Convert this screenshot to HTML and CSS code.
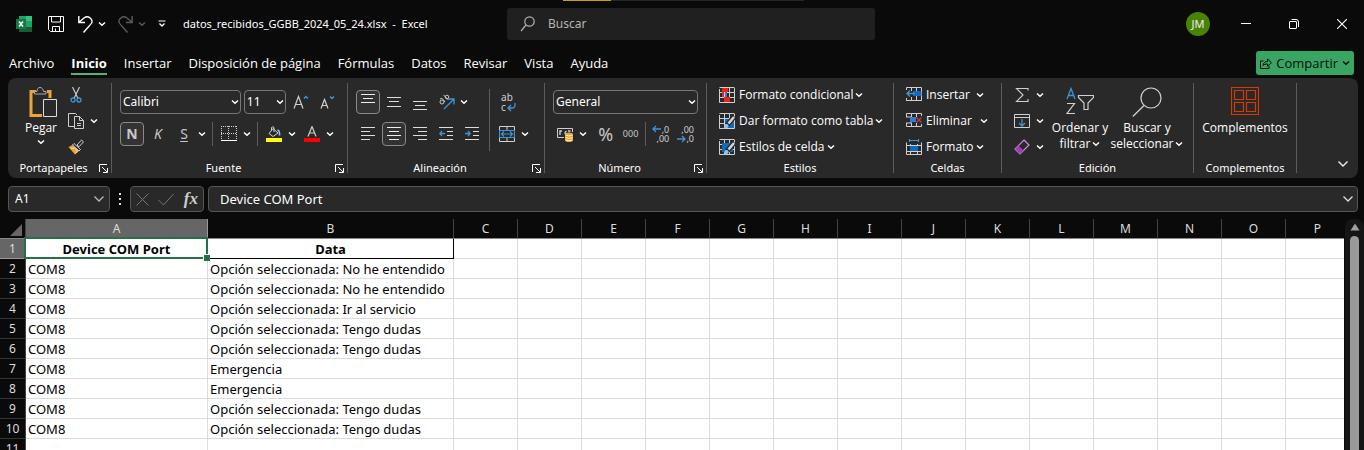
FILE: index.html
```html
<!DOCTYPE html>
<html lang="es">
<head>
<meta charset="utf-8">
<meta name="viewport" content="width=device-width, initial-scale=1">
<title>datos_recibidos_GGBB_2024_05_24.xlsx - Excel</title>
<link rel="stylesheet" href="styles.css">
</head>
<body>
<svg class="defs" aria-hidden="true">
  <symbol id="chev" viewBox="0 0 8 8"><path d="M1 2.500 4 5.200l3-2.700" fill="none" stroke="currentColor" stroke-width="1.500"/></symbol>
  <symbol id="launch" viewBox="0 0 9 9"><path d="M.5 8V.5H8M3 3l5 5M8.500 4v4.500H4" fill="none" stroke="currentColor"/></symbol>
  <symbol id="cells" viewBox="0 0 16 16"><path d="M.5 2v13.500h15V1M.5 .5h15M.5 5.500h15M.5 10.500h15M5.500 .5v15M10.500 .5v15" fill="none" stroke="#d0d0d0"/></symbol>
  <symbol id="brush" viewBox="0 0 16 16"><path d="M15.500 3.500 8 12" stroke="#292929" stroke-width="5"/><path d="M15 4 9.500 10.500" stroke="#d6d6d6" stroke-width="2.500"/><path d="M3 15.500c2 0 2-1 2.500-3s3.500-2 4 0-2 3.500-6.500 3z" fill="#8cc4ee"/></symbol>
</svg>
<div class="app">
  <header class="titlebar">
    <div class="quick">
      <svg class="logo" width="16" height="16" viewBox="0 0 16 16" aria-label="Excel"><path d="M3 0h7v6H3z" fill="#21a366"/><path d="M10 0h6v5h-6z" fill="#33c481"/><path d="M3 5h7v6H3z" fill="#107c41"/><path d="M10 5h6v6h-6z" fill="#21a366"/><path d="M3 11h13v5H3z" fill="#185c37"/><path d="M0 3h10v10H0z" fill="#107c41"/><path d="m3 5.500 4 5M7 5.500l-4 5" stroke="#fff" stroke-width="1.500"/></svg>
      <button class="plain save" aria-label="Guardar"><svg width="16" height="16" viewBox="0 0 16 16"><path d="M.5 .5h15v15H2.500l-2-2zM3.500 .5v5.500h9V.5M4.500 15.500v-5h7v5M7.500 15v-2.500" fill="none" stroke="#fff"/></svg></button>
      <button class="plain undo" aria-label="Deshacer"><svg width="15" height="17" viewBox="0 0 15 17"><path d="M.8 0v6.500H7M1 6.300 6 2c4-3 8.500.5 8 4-.3 2-3 4-8.500 10.500" fill="none" stroke="#fff" stroke-width="1.400"/></svg></button>
      <button class="plain" aria-label="Opciones de deshacer"><svg class="chev"><use href="#chev"/></svg></button>
      <button class="plain redo dim" aria-label="Rehacer"><svg width="15" height="17" viewBox="0 0 15 17"><path d="M14.200 0v6.500H8M14 6.300 9 2C5-1 .5 2.500 1 6c.3 2 3 4 8.500 10.500" fill="none" stroke="currentColor" stroke-width="1.400"/></svg></button>
      <button class="plain dim" aria-label="Opciones de rehacer"><svg class="chev"><use href="#chev"/></svg></button>
      <button class="plain custom" aria-label="Personalizar"><svg width="8" height="8" viewBox="0 0 8 8"><path d="M.5 1h7" stroke="#fff"/><path d="M1.500 3.500 4 6l2.500-2.500" fill="none" stroke="#fff" stroke-width="1.300"/></svg></button>
      <h1>datos_recibidos_GGBB_2024_05_24.xlsx&nbsp; -&nbsp; Excel</h1>
    </div>
    <label class="search">
      <svg width="16" height="16" viewBox="0 0 16 16"><circle cx="9.500" cy="5.500" r="4.700" fill="none" stroke="#b0b0b0" stroke-width="1.200"/><path d="M6 9 1 15" stroke="#b0b0b0" stroke-width="1.200"/></svg>
      <input type="text" placeholder="Buscar" aria-label="Buscar">
    </label>
    <div class="window">
      <span class="avatar">JM</span>
      <button class="plain" aria-label="Minimizar"><svg width="10" height="10" viewBox="0 0 10 10"><path d="M0 4.500h10" stroke="#fff"/></svg></button>
      <button class="plain" aria-label="Restaurar"><svg width="10" height="10" viewBox="0 0 10 10"><path d="M.5 3q0-.5.5-.5h6q.5 0 .5.5v6q0 .5-.5.5H1q-.5 0-.5-.5zM2.500 .5H7q2.500 0 2.500 2.500v5" fill="none" stroke="#fff"/></svg></button>
      <button class="plain" aria-label="Cerrar"><svg width="10" height="10" viewBox="0 0 10 10"><path d="m0 0 10 10M10 0 0 10" stroke="#fff" stroke-width="1.100"/></svg></button>
    </div>
    <div class="notch"></div>
  </header>

  <nav class="tabs">
    <a href="#">Archivo</a><a href="#" class="active">Inicio</a><a href="#">Insertar</a><a href="#">Disposición de página</a><a href="#">Fórmulas</a><a href="#">Datos</a><a href="#">Revisar</a><a href="#">Vista</a><a href="#">Ayuda</a>
    <button class="share"><svg width="12" height="12" viewBox="0 0 12 12"><path d="M3.500 4H.5v7.500h8.500V9M3 8.500C3.500 5.500 5 4.500 7.500 4.500V2l4 3.700-4 3.500V7C5.500 7 4.200 7.300 3 8.500z" fill="none" stroke="#0d0d0d"/></svg>Compartir<svg class="chev"><use href="#chev"/></svg></button>
  </nav>

  <main class="ribbon">
    <section class="group g-clip">
      <div class="body">
        <button class="big paste"><svg width="32" height="31" viewBox="-4 0 32 31"><path d="M7 4.500H2v24h11M18 4.500h3V11" fill="none" stroke="#eda33b" stroke-width="3"/><path d="M5.500 7V4.500H8C8 2 9 .5 11 .5S14 2 14.500 4.500H17V7z" fill="#292929" stroke="#aaa"/><path d="M14.500 12.500h13v17h-13z" fill="#292929" stroke="#ddd"/></svg><span>Pegar</span><svg class="chev"><use href="#chev"/></svg></button>
        <div class="stack">
          <div class="row"><button class="tool" aria-label="Cortar"><svg width="12" height="16" viewBox="0 0 12 16"><path d="M2.500 0 8 11.500M9.500 0 4 11.500" stroke="#c8c8c8" stroke-width="1.200"/><circle cx="3" cy="13" r="2" fill="none" stroke="#3f94d6" stroke-width="1.300"/><circle cx="9" cy="13" r="2" fill="none" stroke="#3f94d6" stroke-width="1.300"/></svg></button></div>
          <div class="row"><button class="tool" aria-label="Copiar"><svg width="16" height="16" viewBox="0 0 16 16"><path d="M6 13.500H.5V.5h7L9 2M6.500 3.500h5l4 4v8h-9zM11.500 3.500v4h4M9 10.500h4M9 12.500h4" fill="none" stroke="#d0d0d0"/></svg></button><button class="drop" aria-label="Más"><svg class="chev"><use href="#chev"/></svg></button></div>
          <div class="row"><button class="tool" aria-label="Copiar formato"><svg width="16" height="16" viewBox="0 0 16 16"><path d="M.5 8 4.500 6l7 5.500-4.500 4z" fill="#eda33b"/><path d="M2.500 9.500 6.500 9l3 3-2 2.500" stroke="#ffe0a0" fill="none"/><path d="m6 4.500 6.500 6L11 12 4.500 6z" fill="#292929" stroke="#d0d0d0"/><path d="m9 6 4.500-5 2 1.800-4.500 5z" fill="#292929" stroke="#d0d0d0"/></svg></button></div>
        </div>
      </div>
      <footer><span>Portapapeles</span><button class="plain" aria-label="Opciones"><svg class="launch"><use href="#launch"/></svg></button></footer>
    </section>

    <section class="group g-font">
      <div class="body two">
        <div class="row">
          <label class="combo wide"><select aria-label="Fuente"><option>Calibri</option></select><svg class="chev"><use href="#chev"/></svg></label>
          <label class="combo size"><select aria-label="Tamaño"><option>11</option></select><svg class="chev"><use href="#chev"/></svg></label>
          <button class="tool" aria-label="Aumentar tamaño"><svg width="16" height="16" viewBox="0 0 16 16"><path d="m1 14.500 4.500-12 4.500 12M2.500 10.500h6" fill="none" stroke="#d0d0d0" stroke-width="1.200"/><path d="m11 4.500 2-2 2 2" fill="none" stroke="#3f94d6" stroke-width="1.400"/></svg></button>
          <button class="tool" aria-label="Disminuir tamaño"><svg width="16" height="16" viewBox="0 0 16 16"><path d="m2 14.500 3.500-9 3.500 9M3 11.500h5" fill="none" stroke="#d0d0d0" stroke-width="1.200"/><path d="m11 2.500 2 2 2-2" fill="none" stroke="#3f94d6" stroke-width="1.400"/></svg></button>
        </div>
        <div class="row g2">
          <button class="tool on glyph bold">N</button>
          <button class="tool glyph italic">K</button>
          <span class="row"><button class="tool glyph under">S</button><button class="drop" aria-label="Subrayado"><svg class="chev"><use href="#chev"/></svg></button></span>
          <i class="sep"></i>
          <span class="row"><button class="tool" aria-label="Bordes"><svg width="16" height="16" viewBox="0 0 16 16"><path d="M0 .5h16M.5 0v14M15.500 0v14M7.500 0v14M0 7.500h16" stroke="#d0d0d0" stroke-dasharray="1 1"/><path d="M0 14.500h16" stroke="#fff"/></svg></button><button class="drop" aria-label="Más bordes"><svg class="chev"><use href="#chev"/></svg></button></span>
          <i class="sep"></i>
          <span class="row"><button class="tool" aria-label="Color de relleno"><svg width="16" height="16" viewBox="0 0 16 16"><path d="M0 12h16v4H0z" fill="#ff0"/><path d="M5.500 4V1.500q1.500-1.500 2.500 0V6M7 2.500l5 4.500-5 3.500L3 7.500z" fill="none" stroke="#d0d0d0"/><path d="M11.500 4q2.500 1 2 5.500" fill="none" stroke="#8cc4ee" stroke-width="1.600"/></svg></button><button class="drop" aria-label="Más colores"><svg class="chev"><use href="#chev"/></svg></button></span>
          <span class="row"><button class="tool" aria-label="Color de fuente"><svg width="16" height="16" viewBox="0 0 16 16"><path d="M0 12h16v4H0z" fill="#f00"/><path d="m4 10.500 4-10 4 10M5.500 7h5" fill="none" stroke="#d0d0d0" stroke-width="1.200"/></svg></button><button class="drop" aria-label="Más colores de fuente"><svg class="chev"><use href="#chev"/></svg></button></span>
        </div>
      </div>
      <footer><span>Fuente</span><button class="plain" aria-label="Opciones"><svg class="launch"><use href="#launch"/></svg></button></footer>
    </section>

    <section class="group g-align">
      <div class="body">
        <div class="two">
          <div class="row g2">
            <button class="tool on" aria-label="Arriba"><svg width="14" height="16" viewBox="0 0 14 16"><path d="M0 .5h14M2 4.500h10M0 8.500h14" stroke="#eee"/></svg></button>
            <button class="tool" aria-label="Medio"><svg width="14" height="16" viewBox="0 0 14 16"><path d="M0 3.500h14M2 7.500h10M0 12.500h14" stroke="#ddd"/></svg></button>
            <button class="tool" aria-label="Abajo"><svg width="14" height="16" viewBox="0 0 14 16"><path d="M0 7.500h14M2 11.500h10M0 15.500h14" stroke="#ddd"/></svg></button>
            <span class="row"><button class="tool" aria-label="Orientación"><svg width="17" height="16" viewBox="0 0 17 16"><path d="m6 15 9.500-9.500M10.500 5h5.500v5.500" fill="none" stroke="#3f94d6" stroke-width="1.300"/><g fill="none" stroke="#c8c8c8"><circle cx="4" cy="8" r="2"/><path d="M2 5q2-2 3.500 1l1.500 2M5.500 1l5 5"/><circle cx="9" cy="3" r="1.800"/></g></svg></button><button class="drop" aria-label="Más orientación"><svg class="chev"><use href="#chev"/></svg></button></span>
          </div>
          <div class="row g2">
            <button class="tool" aria-label="Izquierda"><svg width="14" height="14" viewBox="0 0 14 14"><path d="M0 .5h14M0 4.500h9M0 8.500h14M0 12.500h9" stroke="#ddd"/></svg></button>
            <button class="tool on" aria-label="Centrar"><svg width="14" height="14" viewBox="0 0 14 14"><path d="M0 .5h14M2 4.500h10M0 8.500h14M2 12.500h10" stroke="#eee"/></svg></button>
            <button class="tool" aria-label="Derecha"><svg width="14" height="14" viewBox="0 0 14 14"><path d="M0 .5h14M5 4.500h9M0 8.500h14M5 12.500h9" stroke="#ddd"/></svg></button>
            <button class="tool" aria-label="Disminuir sangría"><svg width="14" height="14" viewBox="0 0 14 14"><path d="M0 .5h14M8 4.500h6M8 8.500h6M0 12.500h14" stroke="#ddd"/><path d="M6 6.500H1M3 4 .8 6.500 3 9" fill="none" stroke="#3f94d6" stroke-width="1.300"/></svg></button>
            <button class="tool" aria-label="Aumentar sangría"><svg width="14" height="14" viewBox="0 0 14 14"><path d="M0 .5h14M8 4.500h6M8 8.500h6M0 12.500h14" stroke="#ddd"/><path d="M0 6.500h5M3 4l2.200 2.500L3 9" fill="none" stroke="#3f94d6" stroke-width="1.300"/></svg></button>
          </div>
        </div>
        <i class="sep tall"></i>
        <div class="two">
          <div class="row"><button class="tool wrap" aria-label="Ajustar texto"><span>ab<br>c</span><svg width="9" height="9" viewBox="0 0 9 9"><path d="M8 0v2q0 3-3 3H1M4 2 1 5l3 3" fill="none" stroke="#3f94d6" stroke-width="1.300"/></svg></button></div>
          <div class="row"><button class="tool" aria-label="Combinar"><svg width="16" height="16" viewBox="0 0 16 16"><path d="M.5 4V.5h15V4M.5 12v3.500h15V12M8 .5V4M8 12v3.500" fill="none" stroke="#d0d0d0"/><path d="M.5 4.500h15v7H.5zM3 8h10M5 5.500 2.500 8 5 10.500M11 5.500 13.500 8 11 10.500" fill="none" stroke="#3f94d6" stroke-width="1.200"/></svg></button><button class="drop" aria-label="Más combinar"><svg class="chev"><use href="#chev"/></svg></button></div>
        </div>
      </div>
      <footer><span>Alineación</span><button class="plain" aria-label="Opciones"><svg class="launch"><use href="#launch"/></svg></button></footer>
    </section>

    <section class="group g-num">
      <div class="body two">
        <div class="row"><label class="combo full"><select aria-label="Formato de número"><option>General</option></select><svg class="chev"><use href="#chev"/></svg></label></div>
        <div class="row spread">
          <span class="row"><button class="tool" aria-label="Moneda"><svg width="16" height="16" viewBox="0 0 16 16"><path d="M7 11.500H.5v-9h15V6" fill="none" stroke="#d0d0d0"/><path d="M3 9V5h2M11 5h2.500M9.500 9q-3-2 0-4" fill="none" stroke="#d0d0d0" stroke-width="1.400"/><path d="M8 8.500q0-2 4-2t4 2V14q0 2-4 2t-4-2z" fill="#eda33b"/><path d="M8.500 9q3.500 2 7 0M8.500 11.500q3.500 2 7 0M8.500 14q3.500 1.500 7 0" fill="none" stroke="#fff0c0"/></svg></button><button class="drop" aria-label="Más moneda"><svg class="chev"><use href="#chev"/></svg></button></span>
          <button class="tool percent" aria-label="Porcentaje">%</button>
          <button class="tool zeros" aria-label="Millares">000</button>
          <i class="sep"></i>
          <button class="tool dec" aria-label="Aumentar decimales"><span>,0</span><span>,00</span><svg class="left" width="9" height="8" viewBox="0 0 9 8"><path d="M9 4H1M4 1 1 4l3 3" fill="none" stroke="#3f94d6" stroke-width="1.300"/></svg></button>
          <button class="tool dec" aria-label="Disminuir decimales"><span>,00</span><span>,0</span><svg class="right" width="9" height="8" viewBox="0 0 9 8"><path d="M0 4h8M5 1l3 3-3 3" fill="none" stroke="#3f94d6" stroke-width="1.300"/></svg></button>
        </div>
      </div>
      <footer><span>Número</span><button class="plain" aria-label="Opciones"><svg class="launch"><use href="#launch"/></svg></button></footer>
    </section>

    <section class="group g-style">
      <div class="body stack">
        <button class="item"><svg width="16" height="16" viewBox="0 0 16 16"><use href="#cells"/><path d="M3 1h6v4H3zM5 10h6v5H5z" fill="#e8241a"/><path d="M3 5h2v5H3z" fill="#e8241a"/><path d="M6 5h2v5H6z" fill="#2b7fd0"/></svg><span>Formato condicional</span><svg class="chev"><use href="#chev"/></svg></button>
        <button class="item"><svg width="16" height="16" viewBox="0 0 16 16"><use href="#cells"/><path d="M6 6h9v9H6z" fill="#0f6cbd"/><use href="#brush"/></svg><span>Dar formato como tabla</span><svg class="chev"><use href="#chev"/></svg></button>
        <button class="item"><svg width="16" height="16" viewBox="0 0 16 16"><use href="#cells"/><path d="M3 4h11v9H3z" fill="#0f6cbd"/><use href="#brush"/></svg><span>Estilos de celda</span><svg class="chev"><use href="#chev"/></svg></button>
      </div>
      <footer><span>Estilos</span></footer>
    </section>

    <section class="group g-cells">
      <div class="body stack">
        <button class="item w78"><svg width="16" height="16" viewBox="0 0 16 16"><path d="M.5 3V.5h15v13H.5V11M.5 13.500h15M5.500 0v4M10.500 0v13M5.500 10v4" fill="none" stroke="#d0d0d0"/><path d="M7 4h8.500v5H7z" fill="#0f6cbd"/><path d="M9 6.500H1M4 3.500l-3 3 3 3" fill="none" stroke="#3f94d6" stroke-width="1.400"/></svg><span>Insertar</span><svg class="chev"><use href="#chev"/></svg></button>
        <button class="item w82"><svg width="16" height="16" viewBox="0 0 16 16"><path d="M.5 4V.5h15V3M.5 10v3.500h15V11M5.500 .5V4M10.500 .5V4M5.500 10v3.500M10.500 10v3.500M0 4h5v6H0" fill="none" stroke="#d0d0d0"/><path d="M4 4h6v5H4z" fill="#2b7fd0"/><path d="m10.500 4.500 5 5M15.500 4.500l-5 5" stroke="#d13438" stroke-width="1.400"/></svg><span>Eliminar</span><svg class="chev"><use href="#chev"/></svg></button>
        <button class="item"><svg width="16" height="16" viewBox="0 0 16 16"><path d="M.5 3.500v12h15v-12M0 6.500h16M0 12.500h16M4.500 5v11M11.500 5v11" fill="none" stroke="#d0d0d0"/><path d="M4 7h8v5H4z" fill="#0f6cbd"/><path d="M3.500 0v3M12.500 0v3M3.500 1.500h9" stroke="#3f94d6" stroke-width="1.200"/></svg><span>Formato</span><svg class="chev"><use href="#chev"/></svg></button>
      </div>
      <footer><span>Celdas</span></footer>
    </section>

    <section class="group g-edit">
      <div class="body">
        <div class="stack">
          <div class="row"><button class="tool" aria-label="Autosuma"><svg width="14" height="16" viewBox="0 0 14 16"><path d="M13 3.500V1.500H1.500L8 8l-6.500 6.500H13V12" fill="none" stroke="#d0d0d0" stroke-width="1.100"/></svg></button><button class="drop" aria-label="Más sumas"><svg class="chev"><use href="#chev"/></svg></button></div>
          <div class="row"><button class="tool" aria-label="Rellenar"><svg width="16" height="14" viewBox="0 0 16 14"><path d="M.5 .5h15v13H.5zM.5 3.500h15" fill="none" stroke="#d0d0d0"/><path d="M8 5v7M5 9l3 3 3-3" fill="none" stroke="#3f94d6" stroke-width="1.300"/></svg></button><button class="drop" aria-label="Más relleno"><svg class="chev"><use href="#chev"/></svg></button></div>
          <div class="row"><button class="tool" aria-label="Borrar"><svg width="16" height="16" viewBox="0 0 16 16"><path d="m10 1 5 5-9 9-5-5z" fill="none" stroke="#d08be0" stroke-width="1.200"/><path d="m4.500 6.500 5 5L6 15l-5-5z" fill="#a33bb5"/></svg></button><button class="drop" aria-label="Más borrar"><svg class="chev"><use href="#chev"/></svg></button></div>
        </div>
        <button class="big sort"><svg width="28" height="31" viewBox="0 0 28 31"><path d="m1 12 4-10.500L9 12M2.500 8.500h5" fill="none" stroke="#3f94d6" stroke-width="1.300"/><path d="M1 16.500h7.500L1 26.500h8" fill="none" stroke="#d0d0d0" stroke-width="1.200"/><path d="M12.500 8.500h15v2L22 16v6.500h-4V16l-5.500-5.500z" fill="none" stroke="#d0d0d0" stroke-width="1.200"/></svg><span>Ordenar y<br>filtrar<svg class="chev"><use href="#chev"/></svg></span></button>
        <button class="big find"><svg width="30" height="31" viewBox="0 0 30 31"><circle cx="19" cy="11" r="10" fill="none" stroke="#d0d0d0" stroke-width="1.200"/><path d="M12 18.500.8 29.500" stroke="#d0d0d0" stroke-width="1.300"/></svg><span>Buscar y<br>seleccionar<svg class="chev"><use href="#chev"/></svg></span></button>
      </div>
      <footer><span>Edición</span></footer>
    </section>

    <section class="group g-addin">
      <div class="body">
        <button class="big addins"><svg width="28" height="31" viewBox="0 0 28 31"><path d="M.5 .5h27v27H.5zM3.500 3.500h9v9h-9zM15.500 3.500h9v9h-9zM3.500 15.500h9v9h-9zM15.500 15.500h9v9h-9z" fill="none" stroke="#d83b01" stroke-width="1.200"/></svg><span>Complementos</span></button>
      </div>
      <footer><span>Complementos</span></footer>
    </section>
    <button class="plain collapse" aria-label="Contraer la cinta"><svg width="12" height="8" viewBox="0 0 12 8"><path d="m1.500 1.500 4.500 4.500 4.500-4.500" fill="none" stroke="#eee" stroke-width="1.400"/></svg></button>
  </main>

  <div class="formula">
    <div class="box name"><input type="text" value="A1" aria-label="Cuadro de nombres"><button class="plain" aria-label="Nombres"><svg width="12" height="8" viewBox="0 0 12 8"><path d="m1.500 1.500 4.500 4.500 4.500-4.500" fill="none" stroke="#bbb" stroke-width="1.300"/></svg></button></div>
    <svg class="dots" width="2" height="12" viewBox="0 0 2 12"><path d="M0 0h2v2H0zM0 5h2v2H0zM0 10h2v2H0z" fill="#ddd"/></svg>
    <div class="box actions">
      <button class="plain" aria-label="Cancelar"><svg width="13" height="13" viewBox="0 0 13 13"><path d="m.5 .5 12 12M12.500 .5l-12 12" stroke="#777"/></svg></button>
      <button class="plain" aria-label="Introducir"><svg width="16" height="13" viewBox="0 0 16 13"><path d="m.5 7 5 5L15.500 1" fill="none" stroke="#777"/></svg></button>
      <button class="plain fx" aria-label="Insertar función">fx</button>
    </div>
    <div class="box bar"><input type="text" value="Device COM Port" aria-label="Barra de fórmulas"><button class="plain" aria-label="Expandir"><svg width="12" height="8" viewBox="0 0 12 8"><path d="m1.500 1.500 4.500 4.500 4.500-4.500" fill="none" stroke="#ddd" stroke-width="1.300"/></svg></button></div>
  </div>

  <div class="sheet">
    <div class="grid">
      <table>
        <colgroup><col class="c-head"><col class="c-a"><col class="c-b"><col span="14" class="c-n"></colgroup>
        <thead><tr><th class="corner"><svg width="12" height="12" viewBox="0 0 12 12"><path d="M12 0v12H0z" fill="#666"/></svg></th><th class="sel">A</th><th>B</th><th>C</th><th>D</th><th>E</th><th>F</th><th>G</th><th>H</th><th>I</th><th>J</th><th>K</th><th>L</th><th>M</th><th>N</th><th>O</th><th>P</th></tr></thead>
        <tbody>
          <tr class="first"><th class="sel">1</th><td class="active-cell">Device COM Port</td><td class="boxed">Data</td><td></td><td></td><td></td><td></td><td></td><td></td><td></td><td></td><td></td><td></td><td></td><td></td><td></td><td></td></tr>
          <tr><th>2</th><td>COM8</td><td>Opción seleccionada: No he entendido</td><td></td><td></td><td></td><td></td><td></td><td></td><td></td><td></td><td></td><td></td><td></td><td></td><td></td><td></td></tr>
          <tr><th>3</th><td>COM8</td><td>Opción seleccionada: No he entendido</td><td></td><td></td><td></td><td></td><td></td><td></td><td></td><td></td><td></td><td></td><td></td><td></td><td></td><td></td></tr>
          <tr><th>4</th><td>COM8</td><td>Opción seleccionada: Ir al servicio</td><td></td><td></td><td></td><td></td><td></td><td></td><td></td><td></td><td></td><td></td><td></td><td></td><td></td><td></td></tr>
          <tr><th>5</th><td>COM8</td><td>Opción seleccionada: Tengo dudas</td><td></td><td></td><td></td><td></td><td></td><td></td><td></td><td></td><td></td><td></td><td></td><td></td><td></td><td></td></tr>
          <tr><th>6</th><td>COM8</td><td>Opción seleccionada: Tengo dudas</td><td></td><td></td><td></td><td></td><td></td><td></td><td></td><td></td><td></td><td></td><td></td><td></td><td></td><td></td></tr>
          <tr><th>7</th><td>COM8</td><td>Emergencia</td><td></td><td></td><td></td><td></td><td></td><td></td><td></td><td></td><td></td><td></td><td></td><td></td><td></td><td></td></tr>
          <tr><th>8</th><td>COM8</td><td>Emergencia</td><td></td><td></td><td></td><td></td><td></td><td></td><td></td><td></td><td></td><td></td><td></td><td></td><td></td><td></td></tr>
          <tr><th>9</th><td>COM8</td><td>Opción seleccionada: Tengo dudas</td><td></td><td></td><td></td><td></td><td></td><td></td><td></td><td></td><td></td><td></td><td></td><td></td><td></td><td></td></tr>
          <tr><th>10</th><td>COM8</td><td>Opción seleccionada: Tengo dudas</td><td></td><td></td><td></td><td></td><td></td><td></td><td></td><td></td><td></td><td></td><td></td><td></td><td></td><td></td></tr>
          <tr><th>11</th><td></td><td></td><td></td><td></td><td></td><td></td><td></td><td></td><td></td><td></td><td></td><td></td><td></td><td></td><td></td><td></td></tr>
        </tbody>
      </table>
    </div>
    <div class="scroll"><svg width="10" height="8" viewBox="0 0 10 8"><path d="M5 .5 9.500 7.500H.5z" fill="#a0a0a0"/></svg><div class="thumb"></div></div>
  </div>
</div>
</body>
</html>
```
FILE: styles.css
```css
* { box-sizing: border-box; }
body {
  margin: 0;
  background: #0a0a0a;
  color: #fff;
  font: 12px/16px "Noto Sans", "Open Sans", sans-serif;
}
button, input, select { font: inherit; color: inherit; background: none; border: 0; padding: 0; margin: 0; outline: 0; }
svg { flex: none; display: block; }
a { color: inherit; text-decoration: none; }
.defs { position: absolute; width: 0; height: 0; }
.app { display: flex; flex-direction: column; height: 100vh; overflow: hidden; }
.chev { width: 8px; height: 8px; }
.launch { width: 9px; height: 9px; }
.plain { display: flex; align-items: center; justify-content: center; }
.row { display: flex; align-items: center; }
.g2 { gap: 2px; }

/* Title bar */
.titlebar {
  position: relative;
  display: grid;
  grid-template-columns: minmax(0, 507fr) 368px minmax(0, 489fr);
  align-items: center;
  height: 48px;
  flex: none;
}
.notch {
  position: absolute;
  top: 0;
  left: 563px;
  width: 241px;
  height: 1px;
  background: linear-gradient(90deg, #c8a010 48px, #262626 48px);
}
.quick { display: flex; align-items: center; padding-left: 16px; white-space: nowrap; }
.quick h1 { margin: 0 0 0 17px; font-size: 11px; font-weight: 400; line-height: 18px; }
.save { margin-left: 16px; }
.undo { margin: 0 5px 0 14px; }
.redo { margin: 0 5px 0 12px; }
.custom { margin-left: 12px; }
.dim { color: #5a5a5a; }
.search {
  display: flex;
  align-items: center;
  gap: 12px;
  height: 32px;
  padding: 0 13px;
  border-radius: 3px;
  background: #202020;
}
.search input { flex: 1; min-width: 0; }
.search input::placeholder { color: #b4b4b4; opacity: 1; }
.window { display: flex; justify-content: flex-end; align-items: center; gap: 4px; }
.window button { width: 44px; height: 32px; }
.avatar {
  width: 24px;
  height: 24px;
  margin-right: 10px;
  border-radius: 50%;
  background: #498205;
  color: #eee;
  font-size: 11px;
  line-height: 24px;
  text-align: center;
}

/* Tabs */
.tabs {
  display: flex;
  align-items: center;
  gap: 17px;
  height: 30px;
  flex: none;
  padding: 0 10px 0 9px;
  font-family: "Open Sans", "Noto Sans", sans-serif;
  font-size: 13px;
}
.tabs a { height: 24px; line-height: 24px; }
.tabs .active { font-weight: 700; border-bottom: 2px solid #4fb477; }
.share {
  display: flex;
  align-items: center;
  gap: 4px;
  height: 24px;
  margin-left: auto;
  padding: 0 4px;
  border-radius: 3px;
  background: #38a662;
  color: #0d0d0d;
}

/* Ribbon */
.ribbon {
  display: flex;
  flex: none;
  height: 100px;
  margin: 0 6px 0 8px;
  padding: 5px 0;
  border-radius: 8px;
  background: #292929;
}
.group { display: flex; flex-direction: column; border-right: 1px solid #5c5c5c; flex: none; }
.g-clip { width: 104px; }
.g-font { width: 236px; }
.g-align { width: 197px; }
.g-num { width: 162px; }
.g-style { width: 187px; }
.g-cells { width: 108px; }
.g-edit { width: 192px; }
.g-addin { width: 103px; }
.body { flex: 1; display: flex; padding: 0 8px; }
.two { display: flex; flex-direction: column; gap: 8px; padding-top: 7px; }
.body.two { padding: 7px 8px 0; }
.stack { display: flex; flex-direction: column; gap: 2px; }
.body.stack { padding: 0 12px; align-items: flex-start; }
.group footer { display: flex; align-items: center; height: 16px; margin-bottom: -3px; font-size: 11px; }
.group footer span { flex: 1; text-align: center; }
.group footer button { margin-right: 3px; }
.tool { display: flex; align-items: center; justify-content: center; width: 24px; height: 24px; border-radius: 4px; flex: none; }
.tool.on { border: 1px solid #8a8a8a; background: #333; }
.drop { display: flex; align-items: center; justify-content: center; width: 12px; height: 24px; }
.sep { width: 1px; height: 24px; margin: 0 2px; background: #5c5c5c; flex: none; }
.sep.tall { height: 62px; margin: 6px 5px 0; }
.glyph { font-size: 14px; color: #c8c8c8; }
.bold { font-weight: 700; }
.italic { font-style: italic; }
.under { text-decoration: underline; text-underline-offset: 2px; }
.combo { position: relative; display: block; height: 24px; margin-right: 3px; border: 1px solid #777; border-radius: 4px; }
.combo select { appearance: none; display: block; width: 100%; height: 22px; padding: 0 2px; }
.combo .chev { position: absolute; right: 1px; top: 7px; }
.combo.wide { width: 123px; }
.combo.size { width: 43px; }
.combo.full { flex: 1; margin: 0; }
.size + .tool { margin-right: 2px; }
.g-clip .body { padding: 0 0 0 13px; }
.g-clip .stack { margin-left: 3px; }
.big { display: flex; flex-direction: column; align-items: center; padding-top: 4px; font-family: "Open Sans", "Noto Sans", sans-serif; }
.big span { line-height: 16px; margin-top: 2px; text-align: center; white-space: nowrap; }
.big span .chev { display: inline-block; margin-left: 2px; }
.paste { width: 40px; }
.paste > .chev { margin-top: 2px; }
.wrap { position: relative; font-size: 10px; line-height: 10px; color: #d0d0d0; }
.wrap span { text-align: left; }
.wrap svg { position: absolute; right: 3px; bottom: 2px; }
.spread { justify-content: space-between; }
.percent { margin-left: 4px; font-size: 18px; color: #c8c8c8; }
.zeros { font-size: 9px; color: #c8c8c8; }
.dec { position: relative; flex-direction: column; align-items: flex-end; font-size: 9px; line-height: 9px; color: #d0d0d0; padding-right: 4px; }
.dec svg { position: absolute; left: 3px; }
.dec .left { top: 3px; }
.dec .right { bottom: 3px; }
.item { display: flex; align-items: center; gap: 2px; height: 24px; white-space: nowrap; font-family: "Open Sans", "Noto Sans", sans-serif; }
.item span { margin-left: 2px; }
.w78 { width: 78px; }
.w82 { width: 82px; }
.w78 .chev, .w82 .chev { margin-left: auto; }
.g-edit .body { padding: 0 0 0 8px; }
.sort { width: 62px; margin-left: 3px; }
.find { width: 72px; }
.g-addin .body { justify-content: center; }
.collapse { margin: auto 9px 5px auto; }

/* Formula bar */
.formula { display: flex; align-items: center; gap: 4px; flex: none; padding: 8px 6px 7px 8px; }
.box { display: flex; align-items: center; height: 26px; border: 1px solid #555; border-radius: 4px; background: #292929; }
.box input { flex: 1; min-width: 0; }
.name { width: 102px; padding: 0 4px 0 6px; }
.dots { margin: 0 5px; }
.actions { width: 74px; padding: 0 5px; justify-content: space-between; }
.fx { font: italic 700 17px/20px "Liberation Serif", serif; color: #ccc; }
.bar { flex: 1; padding: 0 3px 0 11px; font-size: 13px; }

/* Sheet */
.sheet { flex: 1; display: flex; min-height: 0; }
.grid { flex: 1; min-width: 0; overflow: hidden; background: #fff; }
table { width: 1350px; table-layout: fixed; border-collapse: separate; border-spacing: 0; }
.c-head { width: 26px; }
.c-a { width: 182px; }
.c-b { width: 246px; }
.c-n { width: 64px; }
th, td { height: 20px; padding: 0; overflow: hidden; white-space: nowrap; line-height: 18px; }
th { background: #0a0a0a; font-weight: 400; font-size: 12px; color: #ddd; border-right: 1px solid #444; border-bottom: 1px solid #333; }
thead th { border-bottom-color: #888; }
th.sel { background: #666; border-color: #999; }
.corner svg { margin: 2px 3px 0 auto; }
td { padding: 0 2px; font-size: 13px; color: #000; border-right: 1px solid #dcdcdc; border-bottom: 1px solid #dcdcdc; }
.first td { font-weight: 700; text-align: center; }
.boxed { border-color: #000; }
.active-cell { position: relative; overflow: visible; border-color: #217346; }
.active-cell::before { content: ""; position: absolute; inset: -2px -1px -1px -2px; border: 2px solid #217346; }
.active-cell::after { content: ""; position: absolute; right: -3px; bottom: -3px; width: 6px; height: 6px; background: #217346; border: 1px solid #fff; border-width: 1px 0 0 1px; }
.scroll { width: 19px; margin-left: 1px; padding-top: 4px; display: flex; flex-direction: column; align-items: center; gap: 5px; background: #151515; border-radius: 8px 8px 0 0; }
.thumb { width: 9px; flex: 1; border-radius: 5px 5px 0 0; background: #9a9a9a; }
```
